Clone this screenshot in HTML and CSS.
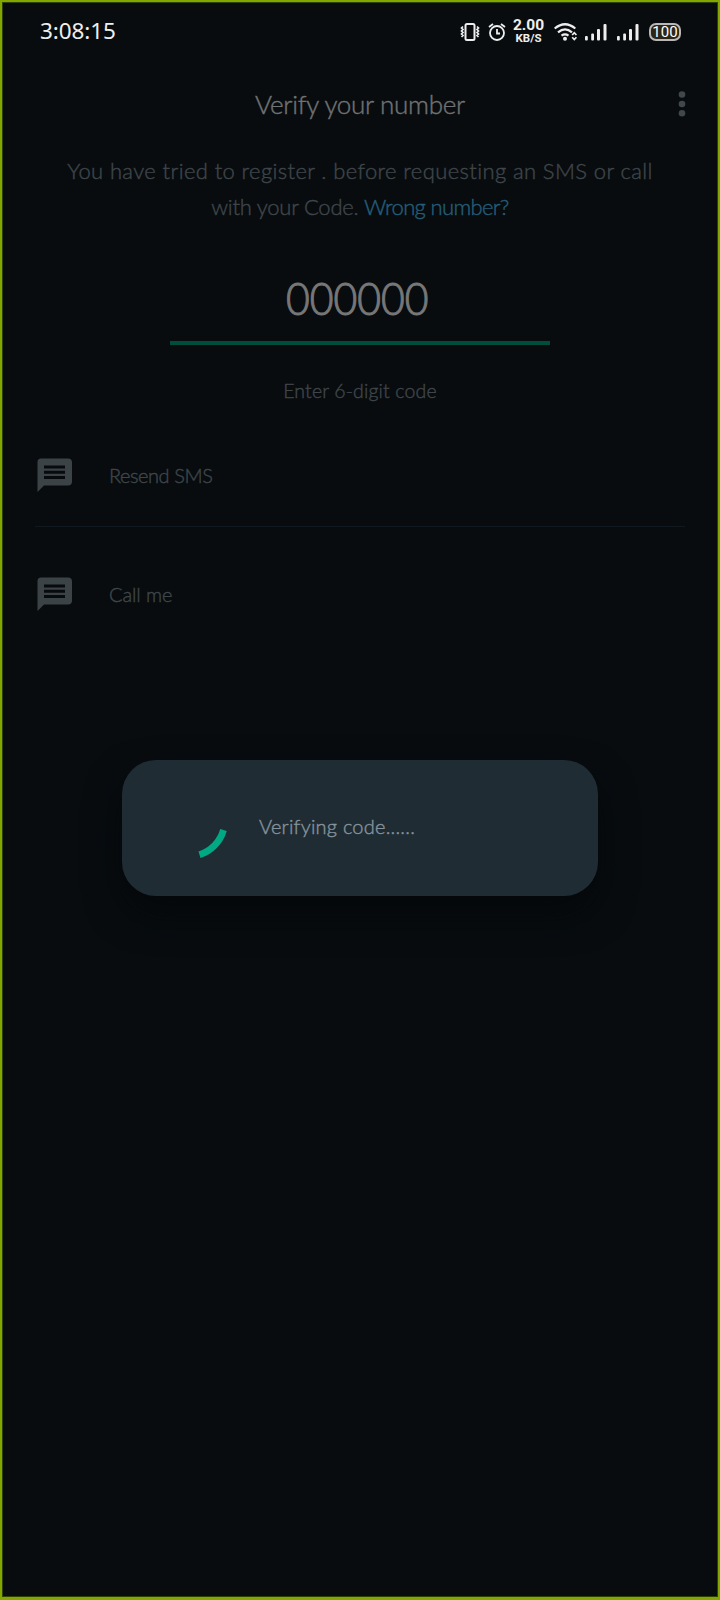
FILE: index.html
```html
<!DOCTYPE html>
<html lang="en">
<head>
<meta charset="utf-8">
<title>Verify your number</title>
<link rel="stylesheet" href="styles.css">
</head>
<body>
<div class="screen">
  <header class="status">
    <span class="clock">3:08:15</span>
    <svg class="status-icon vibrate" width="20" height="18" viewBox="0 0 20 18" fill="none" stroke="#eee"><rect x="5.500" y="1" width="9" height="16" rx="1.500" stroke-width="2"/><path d="M3 3.500L1.500 5 3 6.500 1.500 8 3 9.500 1.500 11 3 12.500 1.500 14M17 3.500L18.500 5 17 6.500 18.500 8 17 9.500 18.500 11 17 12.500 18.500 14" stroke-width="1.700"/></svg>
    <svg class="status-icon alarm" width="18" height="18" viewBox="0 0 18 18" fill="none" stroke="#eee" stroke-width="1.800"><circle cx="9" cy="10" r="7"/><path d="M1 4l4-3M17 4l-4-3M9 6v4.500h3"/></svg>
    <div class="rate"><b class="rate-num">2.00</b><b class="rate-unit">KB/S</b></div>
    <svg class="status-icon wifi" width="24" height="18" viewBox="0 0 24 18" fill="none" stroke="#eee" stroke-width="2.200"><path d="M.7 5.500Q11-3 21.300 5.500M4 9.300Q11 3.500 18 9.300M7.500 12.700q3.500-2.500 7 0"/><circle cx="11" cy="15.700" r="2" fill="#eee" stroke="none"/><path d="M18.200 12l2.100-2.300 2.100 2.300M18.200 14.300l2.100 2.300 2.100-2.300" stroke-width="1.700"/></svg>
    <svg class="status-icon signal" width="22" height="18" viewBox="0 0 22 18" fill="#eee"><rect x="0" y="13" width="2.800" height="4.500" rx="1"/><rect x="6.200" y="10.500" width="2.800" height="7" rx="1"/><rect x="12" y="6" width="3" height="11.500" rx="1"/><rect x="18.500" y="1" width="3" height="16.500" rx="1"/></svg>
    <svg class="status-icon signal" width="22" height="18" viewBox="0 0 22 18" fill="#eee"><rect x="0" y="13" width="2.800" height="4.500" rx="1"/><rect x="6.200" y="10.500" width="2.800" height="7" rx="1"/><rect x="12" y="6" width="3" height="11.500" rx="1"/><rect x="18.500" y="1" width="3" height="16.500" rx="1"/></svg>
    <span class="battery">100</span>
  </header>
  <div class="titlebar">
    <h1 class="title">Verify your number</h1>
    <svg class="more" width="8" height="26" viewBox="0 0 8 26" fill="#41484c"><circle cx="4" cy="3.500" r="3.300"/><circle cx="4" cy="13" r="3.300"/><circle cx="4" cy="22.300" r="3.300"/></svg>
  </div>
  <p class="intro"><span class="intro-first">You have tried to register . before requesting an SMS or call</span><br><span class="intro-second">with your Code. <a class="wrong">Wrong number?</a></span></p>
  <div class="code"><span class="digits">000000</span></div>
  <p class="hint">Enter 6-digit code</p>
  <div class="option">
    <svg class="bubble" width="36" height="36" viewBox="0 0 36 36"><path d="M4 .5h27q4 0 4 4v19q0 4-4 4H7L.5 34V4q0-3.500 3.500-3.500z" fill="#3c4347"/><path d="M7 7.500h21v3H7zM7 12.700h21v3H7zM7 17.900h21v3H7z" fill="#070b0e"/></svg>
    <span class="resend">Resend SMS</span>
  </div>
  <div class="divider"></div>
  <div class="option">
    <svg class="bubble" width="36" height="36" viewBox="0 0 36 36"><path d="M4 .5h27q4 0 4 4v19q0 4-4 4H7L.5 34V4q0-3.500 3.500-3.500z" fill="#3c4347"/><path d="M7 7.500h21v3H7zM7 12.700h21v3H7zM7 17.900h21v3H7z" fill="#070b0e"/></svg>
    <span class="callme">Call me</span>
  </div>
  <div class="dialog">
    <svg class="spinner" width="76" height="76" viewBox="0 0 76 76"><path d="M72.500 48A36.500 36.500 0 0 1 48.500 72.800" fill="none" stroke="#00a884" stroke-width="6.800"/></svg>
    <span class="verifying">Verifying code......</span>
  </div>
</div>
</body>
</html>
```
FILE: styles.css
```css
* { box-sizing: border-box; }
body { margin: 0; background: #080c0f; }
.screen {
  height: 1600px;
  border: 2px solid #82a800;
  border-bottom-width: 3px;
  background: #080c0f;
  box-shadow: inset 0 0 0 1px #304000;
  font-family: Lato, "Open Sans", sans-serif;
  font-weight: 300;
  -webkit-text-stroke: .4px currentColor;
  color: #3f464a;
  overflow: hidden;
}
.status { display: flex; align-items: center; height: 58px; padding: 0 37px 0 38px; color: #eee; -webkit-text-stroke: 0; }
.clock { font: 400 22.5px/28px "Noto Sans", sans-serif; letter-spacing: -.1px; margin: -1px auto 0 0; }
.status-icon { flex: none; margin-top: 2px; }
.vibrate { margin-right: 8px; }
.alarm { margin-right: 7px; }
.rate { width: 31px; display: flex; flex-direction: column; align-items: center; font-family: Roboto, sans-serif; margin-right: 10px; }
.rate-num { font-size: 15.500px; line-height: 13px; font-weight: 700; }
.rate-unit { font-size: 11.500px; line-height: 12px; font-weight: 700; }
.wifi { margin-right: 7px; }
.signal { margin-right: 10px; }
.battery { width: 32px; height: 18px; border: 2px solid #b8b8b8; border-radius: 7px; background: #2b2618; color: #fff; font: 400 15px/14px Roboto, sans-serif; display: flex; justify-content: center; margin-top: 2px; }
.titlebar { display: grid; grid-template-columns: 60px 1fr 60px; align-items: center; height: 88px; }
.title { grid-column: 2; margin: 0; text-align: center; font-size: 26px; line-height: 36px; font-weight: 300; letter-spacing: -.3px; color: #707373; }
.more { justify-self: center; margin: 0 12px 0 0; }
.intro { margin: 5px 0 1px; text-align: center; font-size: 22px; line-height: 36px; white-space: nowrap; }
.intro-first { letter-spacing: .38px; }
.intro-second { letter-spacing: -.25px; }
.wrong { color: #255d78; letter-spacing: -.65px; }
.code { width: 380px; height: 119px; margin: 0 auto; padding-top: 44px; border-bottom: 4px solid #004d3d; text-align: center; }
.digits { display: inline-block; font-size: 45.500px; line-height: 56px; color: #777; -webkit-text-stroke-width: 1.100px; transform: translateX(-3px) scaleX(.9); }
.hint { margin: 32px 0 11px; text-align: center; font-size: 19.500px; line-height: 28px; letter-spacing: .15px; }
.option { display: flex; align-items: center; height: 119px; padding-left: 35px; }
.bubble { flex: none; margin-right: 36px; }
.resend, .callme { font-size: 20px; line-height: 28px; letter-spacing: -.45px; margin-top: -2px; }
.callme { letter-spacing: -.1px; }
.divider { height: 1px; margin: -9px 33px 8px; background: #0f191f; }
.dialog { display: flex; width: 476px; height: 136px; margin: 106px auto 0; padding-left: 29px; border-radius: 34px; align-items: center; background: #202c33; color: #85939c; box-shadow: 0 18px 36px #05080b; }
.spinner { flex: none; margin: -17px 32px 0 0; }
.verifying { font-size: 20px; letter-spacing: .23px; margin-top: -4px; }
```
